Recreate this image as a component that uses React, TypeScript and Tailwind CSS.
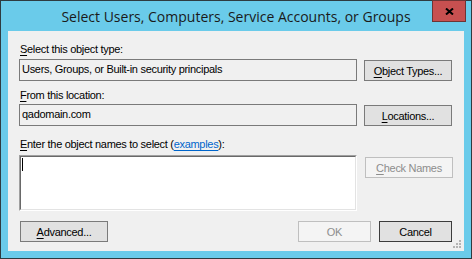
import React from 'react';

const ui = "font-['Liberation_Sans',Arial,sans-serif] text-[11px] leading-[14px] tracking-[-0.3px] text-black";

const Btn = ({ children, disabled, strong, className = '' }: { children: React.ReactNode; disabled?: boolean; strong?: boolean; className?: string }) => (
  <div
    className={`h-[21px] flex items-center justify-center border ${
      disabled ? 'border-[#bfbfbf] bg-[#f4f4f4]' : strong ? 'border-[#3c3c3c] bg-[#e1e1e1]' : 'border-[#7a7a7a] bg-[#e1e1e1]'
    } ${className}`}>
    <span className={disabled ? 'text-[#8d8d8d]' : 'text-black'}>{children}</span>
  </div>
);

const U = ({ children }: { children: string }) => <span className="underline underline-offset-2">{children}</span>;

export default function App() {
  return (
    <div className="w-[472px] h-[259px] border border-[#2e3b40] bg-[#6acbea] flex flex-col">
      <div className="h-[30px] relative flex items-center justify-center">
        <span className="font-['Open_Sans',sans-serif] text-[14px] font-normal text-[#1a1a1a] mt-[1px]">
          Select Users, Computers, Service Accounts, or Groups
        </span>
        <div className="absolute right-[5px] top-[-1px] w-[34px] h-[22px] bg-[#c75050] border border-[#6e3434] flex items-center justify-center">
          <svg width="9" height="7" viewBox="0 0 9 7">
            <path d="M1 0.5 L8 6.5 M8 0.5 L1 6.5" stroke="#000" strokeWidth="2" />
          </svg>
        </div>
      </div>

      <div className={`ml-[7px] w-[456px] h-[220px] bg-[#f0f0f0] relative flex flex-col pl-[11px] ${ui}`}>
        <div className="mt-[11px] pl-[1px] h-[14px]">
          <U>S</U>elect this object type:
        </div>
        <div className="mt-[3px] flex items-start gap-[7px]">
          <div className="w-[338px] h-[22px] border border-[#7a7a7a] flex items-center pl-[2px] pb-[2px]">
            Users, Groups, or Built-in security principals
          </div>
          <Btn className="w-[88px] mt-[1px]">
            <U>O</U>bject Types...
          </Btn>
        </div>

        <div className="mt-[7px] pl-[1px] h-[14px]">
          <U>F</U>rom this location:
        </div>
        <div className="mt-[2px] flex items-start gap-[7px]">
          <div className="w-[338px] h-[22px] border border-[#7a7a7a] flex items-center pl-[2px] pb-[2px]">qadomain.com</div>
          <Btn className="w-[88px] mt-[1px]">
            <U>L</U>ocations...
          </Btn>
        </div>

        <div className="mt-[11px] pl-[1px] h-[14px]">
          <U>E</U>nter the object names to select (<span className="text-[#0066cc] underline underline-offset-2">examples</span>):
        </div>
        <div className="mt-[4px] flex items-start gap-[8px]">
          <div className="w-[338px] h-[56px] border-t border-l border-[#a0a0a0] border-b border-r border-b-white border-r-white">
            <div className="w-full h-full bg-white border-t border-l border-[#696969] border-b border-r border-b-[#e3e3e3] border-r-[#e3e3e3] pl-[1px] pt-[1px]">
              <div className="w-[1px] h-[13px] bg-black" />
            </div>
          </div>
          <Btn disabled className="w-[88px] h-[20px] mt-[2px]">
            <U>C</U>heck Names
          </Btn>
        </div>

        <div className="mt-[10px] flex items-start">
          <Btn className="w-[88px] ml-[1px]">
            <U>A</U>dvanced...
          </Btn>
          <div className="flex-1" />
          <Btn disabled className="w-[73px]">
            OK
          </Btn>
          <Btn strong className="w-[73px] ml-[8px] mr-[12px]">
            Cancel
          </Btn>
        </div>

        <svg className="absolute right-[2px] bottom-[2px]" width="10" height="10" viewBox="0 0 10 10">
          {[
            [7, 1],
            [4, 4],
            [7, 4],
            [1, 7],
            [4, 7],
            [7, 7],
          ].map(([x, y], i) => (
            <rect key={i} x={x} y={y} width="2" height="2" fill="#b4b4b4" />
          ))}
        </svg>
      </div>
    </div>
  );
}
